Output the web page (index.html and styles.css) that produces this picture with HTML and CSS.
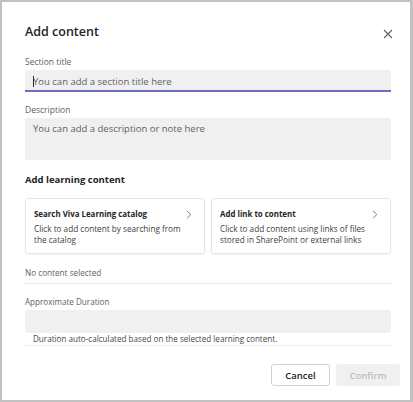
FILE: index.html
```html
<!DOCTYPE html>
<html>

<head>
    <title>Add content</title>
    <link rel="stylesheet" href="styles.css">
</head>

<body>
    <div class="dialog">
        <div class="header">
            <h1 class="title">Add content</h1>
            <button class="close" aria-label="Close">
                <svg width="10" height="10" viewBox="0 0 10 10">
                    <path d="M1 1 L9 9 M9 1 L1 9" stroke="#616161" stroke-width="1.1" fill="none" />
                </svg>
            </button>
        </div>

        <div class="form">
            <div class="label label-first">Section title</div>
            <div class="field field-active">
                <span class="caret"></span><span class="placeholder">You can add a section title here</span>
            </div>

            <div class="label">Description</div>
            <div class="field field-area">
                <span class="placeholder">You can add a description or note here</span>
            </div>

            <h2 class="section-heading">Add learning content</h2>
            <div class="cards">
                <div class="card">
                    <div class="card-text">
                        <div class="card-title">Search Viva Learning catalog</div>
                        <div class="card-body">Click to add content by searching from the catalog</div>
                    </div>
                    <svg class="chevron" width="6" height="9" viewBox="0 0 6 9">
                        <path d="M1 0.8 L4.8 4.5 L1 8.2" stroke="#707070" stroke-width="0.9" fill="none" />
                    </svg>
                </div>
                <div class="card">
                    <div class="card-text">
                        <div class="card-title">Add link to content</div>
                        <div class="card-body">Click to add content using links of files stored in SharePoint or external links</div>
                    </div>
                    <svg class="chevron" width="6" height="9" viewBox="0 0 6 9">
                        <path d="M1 0.8 L4.8 4.5 L1 8.2" stroke="#707070" stroke-width="0.9" fill="none" />
                    </svg>
                </div>
            </div>

            <div class="selection">No content selected</div>

            <div class="label label-small">Approximate Duration</div>
            <div class="field field-duration"></div>
            <div class="hint">Duration auto-calculated based on the selected learning content.</div>
        </div>

        <div class="footer">
            <button class="btn btn-cancel">Cancel</button>
            <button class="btn btn-confirm" disabled>Confirm</button>
        </div>
    </div>
</body>

</html>
```

FILE: styles.css
```css
body {
    margin: 0;
    font-family: "Segoe UI", "Open Sans", sans-serif;
    color: #242424;
}

.dialog {
    width: 413px;
    height: 402px;
    box-sizing: border-box;
    border: 2px solid #c2c2c2;
    border-right-width: 3px;
    background-color: #fff;
    padding: 20px 19px 0 23px;
}

.header {
    display: flex;
    justify-content: space-between;
    align-items: center;
    height: 20px;
}

.title {
    margin: 0;
    font-size: 12.5px;
    font-weight: 600;
    line-height: 20px;
}

.close {
    border: none;
    background: none;
    padding: 0;
    margin: 4px -2px 0 0;
    width: 10px;
    height: 10px;
    display: flex;
}

.label {
    font-size: 8.5px;
    line-height: 14px;
    color: #616161;
    margin: 11px 0 1px;
}

.label-first {
    margin-top: 13px;
}

.label-small {
    font-size: 8.1px;
}

.field {
    background-color: #f0f0f0;
    border-radius: 3px;
    box-sizing: border-box;
    height: 22px;
    padding: 0 8px;
    display: flex;
    align-items: center;
    font-size: 9.5px;
    color: #616161;
}

.field-active {
    border-bottom: 2px solid #6b6bc4;
    border-radius: 3px 3px 0 0;
    padding-top: 2px;
}

.field-area {
    height: 42px;
    align-items: flex-start;
    padding-top: 4px;
}

.field-duration {
    height: 23px;
}

.caret {
    width: 1px;
    height: 11px;
    background-color: #242424;
    margin-right: -1px;
}

.section-heading {
    margin: 12px 0 10px;
    font-size: 9.5px;
    font-weight: 700;
    line-height: 16px;
}

.cards {
    display: grid;
    grid-template-columns: 1fr 1fr;
    gap: 6px;
}

.card {
    height: 56px;
    box-sizing: border-box;
    border: 1px solid #e6e6e6;
    border-radius: 3px;
    box-shadow: 0 1px 2px rgba(0, 0, 0, 0.05);
    padding: 9px 12px 0 8px;
    display: flex;
    justify-content: space-between;
    align-items: flex-start;
}

.card-title {
    font-size: 7.9px;
    font-weight: 700;
    line-height: 12px;
}

.card-body {
    font-size: 8.2px;
    line-height: 11px;
    color: #424242;
    margin-top: 3px;
}

.chevron {
    flex-shrink: 0;
    margin-top: 2px;
    margin-left: 2px;
}

.selection {
    margin-top: 12px;
    font-size: 8.2px;
    line-height: 14px;
    color: #616161;
    padding-bottom: 3px;
    border-bottom: 1px solid #e8e8e8;
}

.hint {
    font-size: 8.1px;
    line-height: 12px;
    color: #484848;
    padding-left: 8px;
    border-bottom: 1px solid #efefef;
}

.footer {
    display: flex;
    justify-content: flex-end;
    gap: 6px;
    margin: 18px -9px 0 0;
}

.btn {
    height: 22px;
    box-sizing: border-box;
    border-radius: 3px;
    font-family: inherit;
    font-size: 9.5px;
    font-weight: 600;
    padding: 0;
}

.btn-cancel {
    width: 59px;
    background-color: #fff;
    border: 1px solid #d1d1d1;
    color: #242424;
}

.btn-confirm {
    width: 64px;
    background-color: #f0f0f0;
    border: none;
    color: #bdbdbd;
}
```
